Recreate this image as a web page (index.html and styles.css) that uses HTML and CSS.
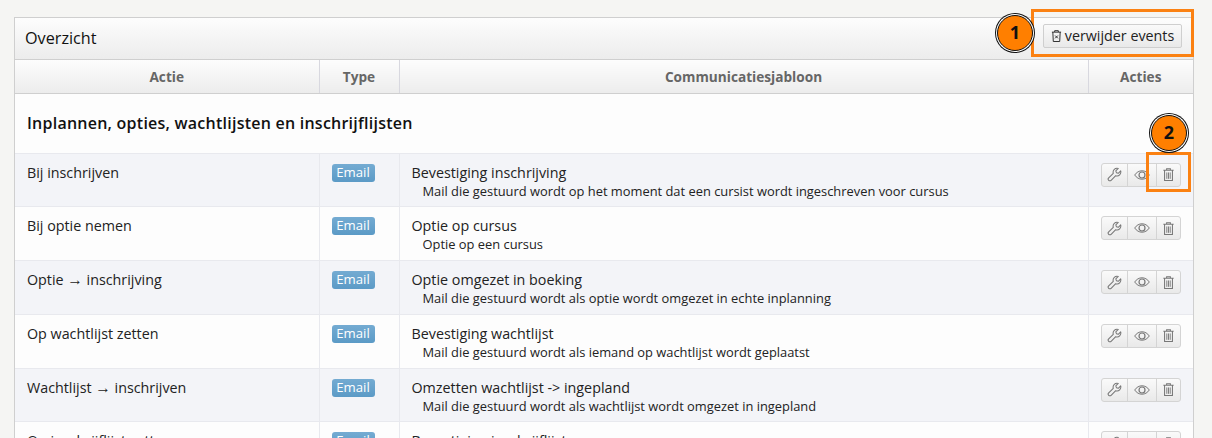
FILE: index.html
```html
<!DOCTYPE html>
<html lang="nl">
<head>
<meta charset="utf-8">
<title>Overzicht</title>
<link rel="stylesheet" href="styles.css">
</head>
<body>
<svg class="defs" width="0" height="0" aria-hidden="true">
  <symbol id="wrench" viewBox="0 0 16 16"><path d="M14.6 4.1 12 6.700l-2-.6-.6-2L12 1.500A4.200 4.200 0 0 0 6.700 6.700L1.800 11.600a1.800 1.800 0 0 0 2.600 2.600L9.300 9.300a4.200 4.200 0 0 0 5.300-5.200Z" fill="none" stroke="currentColor" stroke-width="1.100" stroke-linejoin="round"/></symbol>
  <symbol id="eye" viewBox="0 0 16 16"><path d="M.7 8C2.500 5.300 5 3.800 8 3.800s5.500 1.500 7.300 4.200C13.500 10.700 11 12.200 8 12.200S2.500 10.700.7 8Z" fill="none" stroke="currentColor" stroke-width="1"/><circle cx="8" cy="8" r="3" fill="none" stroke="currentColor" stroke-width="1.200"/></symbol>
  <symbol id="trash" viewBox="0 0 16 16"><path d="M2.500 3.500h11M6 3.300V1.800h4v1.500M3.800 3.800v10.700h8.400V3.800" fill="none" stroke="currentColor" stroke-width="1.100"/><path d="M6.200 5.800v6.800M8 5.800v6.800M9.800 5.800v6.800" stroke="currentColor" stroke-width="1"/></symbol>
  <symbol id="trash-x" viewBox="0 0 12 14"><path d="M1 2.800h10M4 2.600V1.200h4v1.400M2 2.800l.5 10.200h7L10 2.800" fill="none" stroke="currentColor" stroke-width="1"/><path d="m4.500 6.500 3 3m0-3-3 3" stroke="currentColor" stroke-width="1"/></symbol>
</svg>
<main class="card">
  <header class="card-head">
    <h1 class="card-title">Overzicht</h1>
    <button class="btn-events" type="button"><svg class="icon-x"><use href="#trash-x"/></svg>verwijder events</button>
  </header>
  <table class="grid">
    <colgroup><col class="c1"><col class="c2"><col class="c3"><col class="c4"></colgroup>
    <thead><tr><th>Actie</th><th>Type</th><th>Communicatiesjabloon</th><th>Acties</th></tr></thead>
    <tbody>
      <tr class="section"><td colspan="4">Inplannen, opties, wachtlijsten en inschrijflijsten</td></tr>
      <tr class="odd"><td>Bij inschrijven</td><td><span class="badge">Email</span></td><td><div class="tpl">Bevestiging inschrijving</div><div class="desc">Mail die gestuurd wordt op het moment dat een cursist wordt ingeschreven voor cursus</div></td><td><div class="acts"><button type="button"><svg class="wr"><use href="#wrench"/></svg></button><button type="button"><svg class="ey"><use href="#eye"/></svg></button><button type="button"><svg class="tr"><use href="#trash"/></svg></button></div></td></tr>
      <tr><td>Bij optie nemen</td><td><span class="badge">Email</span></td><td><div class="tpl">Optie op cursus</div><div class="desc">Optie op een cursus</div></td><td><div class="acts"><button type="button"><svg class="wr"><use href="#wrench"/></svg></button><button type="button"><svg class="ey"><use href="#eye"/></svg></button><button type="button"><svg class="tr"><use href="#trash"/></svg></button></div></td></tr>
      <tr class="odd"><td>Optie <span class="arr">→</span> inschrijving</td><td><span class="badge">Email</span></td><td><div class="tpl">Optie omgezet in boeking</div><div class="desc">Mail die gestuurd wordt als optie wordt omgezet in echte inplanning</div></td><td><div class="acts"><button type="button"><svg class="wr"><use href="#wrench"/></svg></button><button type="button"><svg class="ey"><use href="#eye"/></svg></button><button type="button"><svg class="tr"><use href="#trash"/></svg></button></div></td></tr>
      <tr><td>Op wachtlijst zetten</td><td><span class="badge">Email</span></td><td><div class="tpl">Bevestiging wachtlijst</div><div class="desc">Mail die gestuurd wordt als iemand op wachtlijst wordt geplaatst</div></td><td><div class="acts"><button type="button"><svg class="wr"><use href="#wrench"/></svg></button><button type="button"><svg class="ey"><use href="#eye"/></svg></button><button type="button"><svg class="tr"><use href="#trash"/></svg></button></div></td></tr>
      <tr class="odd"><td>Wachtlijst <span class="arr">→</span> inschrijven</td><td><span class="badge">Email</span></td><td><div class="tpl">Omzetten wachtlijst -&gt; ingepland</div><div class="desc">Mail die gestuurd wordt als wachtlijst wordt omgezet in ingepland</div></td><td><div class="acts"><button type="button"><svg class="wr"><use href="#wrench"/></svg></button><button type="button"><svg class="ey"><use href="#eye"/></svg></button><button type="button"><svg class="tr"><use href="#trash"/></svg></button></div></td></tr>
      <tr><td>Op inschrijflijst zetten</td><td><span class="badge">Email</span></td><td><div class="tpl">Bevestiging inschrijflijst</div></td><td><div class="acts"><button type="button"><svg class="wr"><use href="#wrench"/></svg></button><button type="button"><svg class="ey"><use href="#eye"/></svg></button><button type="button"><svg class="tr"><use href="#trash"/></svg></button></div></td></tr>
    </tbody>
  </table>
</main>
<div class="mark box-1"></div>
<div class="mark box-2"></div>
<div class="pin pin-1">1</div>
<div class="pin pin-2">2</div>
</body>
</html>
```
FILE: styles.css
```css
* { box-sizing: border-box; }
html { height: 100%; overflow: hidden; }
body {
  margin: 0;
  height: 438px;
  overflow: hidden;
  background: #f5f5f3;
  font-family: "Open Sans", "Liberation Sans", sans-serif;
  font-size: 14px;
  color: #222;
  padding: 17px 18px 0 14px;
  position: relative;
}
.defs { position: absolute; }
.card {
  border: 1px solid #cfcfcf;
  border-bottom: 0;
  background: #fdfdfd;
  width: 1180px;
}
.card-head {
  height: 42px;
  border-bottom: 1px solid #cfcfcf;
  background: linear-gradient(#fdfdfd, #ececec);
  display: flex;
  align-items: center;
  justify-content: space-between;
  padding: 0 11px 2px 10px;
}
.card-title { margin: 0; font-size: 16.200px; font-weight: 400; color: #111; line-height: 20px; }
.btn-events {
  height: 24px;
  width: 139px;
  margin-bottom: 3px;
  padding: 0;
  border: 1px solid #cfcfcf;
  border-radius: 2px;
  background: linear-gradient(#fafafa, #e9e9e9);
  font: 400 14.300px/20px "Open Sans", sans-serif;
  color: #222;
  display: flex;
  align-items: center;
  justify-content: center;
  gap: 3px;
}
.icon-x { width: 11px; height: 14px; color: #222; }
.grid { width: 100%; border-collapse: collapse; table-layout: fixed; }
.c1 { width: 304px; }
.c2 { width: 80px; }
.c4 { width: 105px; }
th {
  height: 33px;
  padding: 0;
  font-size: 13.650px;
  font-weight: 700;
  color: #666;
  background: linear-gradient(#fdfdfd, #ececec);
  border-bottom: 1px solid #cfcfcf;
  border-left: 1px solid #d8d8df;
  text-align: center;
}
th:first-child { border-left: 0; }
td {
  height: 53.750px;
  padding: 9px 12px 0;
  vertical-align: top;
  border-bottom: 1px solid #e8e9ee;
  border-left: 1px solid #e8e9ee;
  font-size: 14.300px;
  line-height: 20px;
  color: #222;
}
td:first-child { border-left: 0; }
.odd td { background: #f3f4f8; }
.section td { height: 60.100px; padding: 19px 12px 0; font-size: 16px; font-weight: 600; letter-spacing: .24px; color: #111; line-height: 20px; }
.arr { font-family: "Liberation Sans", sans-serif; font-size: 15.500px; line-height: 1; }
.badge {
  display: inline-block;
  width: 43px;
  height: 18px;
  margin-top: 1px;
  background: linear-gradient(#74abd2, #5b9ac6);
  border-radius: 3px;
  color: #fff;
  font-size: 13.200px;
  line-height: 16px;
  text-align: center;
  vertical-align: top;
}
.tpl { font-size: 14.300px; line-height: 20px; }
.desc { font-size: 12.880px; line-height: 16px; padding-left: 11px; }
.acts { display: flex; width: 80px; height: 24px; border: 1px solid #d4d4d4; border-radius: 3px; background: linear-gradient(#fafafa, #e9e9e9); }
.acts button { border: 0; padding: 0; background: transparent; color: #777; display: flex; align-items: center; justify-content: center; border-left: 1px solid #d4d4d4; flex: 1 1 0; }
.acts button:first-child { border-left: 0; flex: 0 0 25px; }
.acts button:nth-child(2) { flex: 0 0 29px; }
.wr { width: 15px; height: 15px; }
.ey { width: 16px; height: 16px; }
.tr { width: 15px; height: 15px; }
.mark { position: absolute; border: 3px solid #fb8112; }
.box-1 { left: 1031px; top: 9px; width: 163px; height: 48px; }
.box-2 { left: 1146px; top: 152px; width: 45px; height: 40px; }
.pin {
  position: absolute;
  width: 36px;
  height: 36px;
  border-radius: 50%;
  background: #ff7f00;
  border: 1px solid #111;
  box-shadow: 0 0 0 1px #fff, 0 0 0 2px #111;
  color: #111;
  font-size: 18px;
  font-weight: 700;
  line-height: 33px;
  text-align: center;
}
.pin-1 { left: 997px; top: 15px; }
.pin-2 { left: 1151px; top: 115px; }
```
